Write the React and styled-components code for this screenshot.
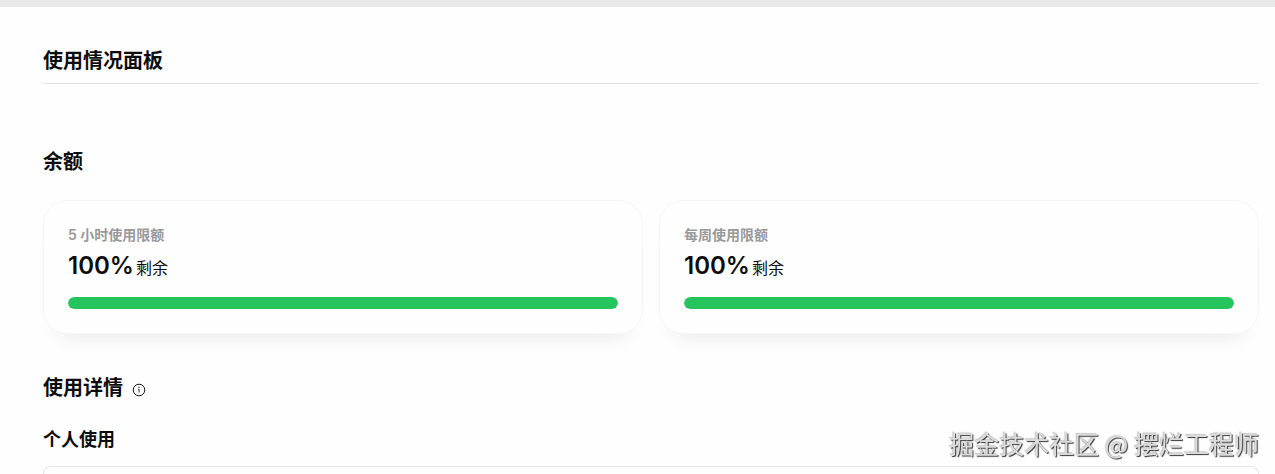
import React from "react";
import styled, { createGlobalStyle } from "styled-components";

const GlobalStyle = createGlobalStyle`
  *, *::before, *::after { box-sizing: border-box; }
  body {
    margin: 0;
    background: #fefefe;
    color: #0d0d0d;
    font-family: Inter, "Noto Sans CJK SC", sans-serif;
  }
  h1, h2, h3, p { margin: 0; }
`;

const Page = styled.div`
  min-height: 100vh;
  display: flex;
  flex-direction: column;
`;

const TopStrip = styled.div`
  height: 7px;
  background: #e8e8e8;
`;

const Content = styled.main`
  flex: 1;
  display: flex;
  flex-direction: column;
  padding: 40px 16px 0 43px;
`;

const PageHeader = styled.header`
  padding-bottom: 8px;
  border-bottom: 1px solid #e2e2e2;
  margin-bottom: 64px;
`;

const PageTitle = styled.h1`
  font-size: 20px;
  line-height: 28px;
  font-weight: 600;
`;

const SectionTitle = styled.h2`
  font-size: 20px;
  line-height: 28px;
  font-weight: 600;
`;

const SectionHeading = styled.div`
  display: flex;
  align-items: center;
  gap: 9px;
`;

const Cards = styled.section`
  display: grid;
  grid-template-columns: 1fr 1fr;
  gap: 16px;
  margin: 24px 0 40px;
`;

const Card = styled.article`
  padding: 24px;
  border: 1px solid #f6f6f6;
  border-radius: 24px;
  background: #fefefe;
  box-shadow: 0 18px 20px -14px rgba(0, 0, 0, 0.08);
`;

const CardLabel = styled.h3`
  font-size: 14px;
  line-height: 20px;
  font-weight: 600;
  color: #999;
`;

const CardValue = styled.p`
  display: flex;
  align-items: baseline;
  gap: 2px;
  margin: 3px 0 13px;
  font-size: 16px;
  line-height: 24px;
`;

const Percent = styled.strong`
  font-size: 24px;
  line-height: 36px;
  font-weight: 600;
`;

const Track = styled.div`
  height: 12px;
  border-radius: 6px;
  background: #ececec;
  overflow: hidden;
`;

const Fill = styled.div`
  height: 100%;
  border-radius: 6px;
  background: #26c45d;
`;

const InfoButton = styled.button`
  display: flex;
  padding: 2px 0;
  margin-top: 4px;
  border: 0;
  background: none;
  color: #1a1a1a;
`;

const SubTitle = styled.h3`
  margin: 24px 0 12px;
  font-size: 18px;
  line-height: 28px;
  font-weight: 600;
`;

const ChartPanel = styled.section`
  flex: 1;
  border: 1px solid #e6e6e6;
  border-bottom: 0;
  border-radius: 8px 8px 0 0;
`;

const Watermark = styled.div`
  position: fixed;
  right: 16px;
  bottom: 13px;
  font-family: "Noto Sans CJK SC", sans-serif;
  font-size: 25px;
  line-height: 36px;
  color: #dcdcdc;
  text-shadow: 1px 1px 1px #333, -1px -1px 1px #c8c8c8;
  white-space: nowrap;
  pointer-events: none;
`;

const limits = [
  { label: "5 小时使用限额", remaining: 100 },
  { label: "每周使用限额", remaining: 100 },
];

function LimitCard({ label, remaining }) {
  return (
    <Card>
      <CardLabel>{label}</CardLabel>
      <CardValue>
        <Percent>{remaining}%</Percent>
        <span>剩余</span>
      </CardValue>
      <Track
        role="progressbar"
        aria-label={label}
        aria-valuemin={0}
        aria-valuemax={100}
        aria-valuenow={remaining}
      >
        <Fill style={{ width: `${remaining}%` }} />
      </Track>
    </Card>
  );
}

function InfoIcon() {
  return (
    <svg width="14" height="14" viewBox="0 0 14 14" fill="none" aria-hidden="true">
      <circle cx="7" cy="7" r="5.8" stroke="currentColor" strokeWidth="1" />
      <path d="M6.2 6.4H7.1V9.6" stroke="currentColor" strokeWidth="0.9" />
      <circle cx="7" cy="4.4" r="0.65" fill="currentColor" />
    </svg>
  );
}

export default function App() {
  return (
    <Page>
      <GlobalStyle />
      <TopStrip />
      <Content>
        <PageHeader>
          <PageTitle>使用情况面板</PageTitle>
        </PageHeader>
        <SectionTitle>余额</SectionTitle>
        <Cards>
          {limits.map((limit) => (
            <LimitCard key={limit.label} {...limit} />
          ))}
        </Cards>
        <SectionHeading>
          <SectionTitle>使用详情</SectionTitle>
          <InfoButton type="button" aria-label="使用详情说明">
            <InfoIcon />
          </InfoButton>
        </SectionHeading>
        <SubTitle>个人使用</SubTitle>
        <ChartPanel aria-label="个人使用" />
      </Content>
      <Watermark>掘金技术社区 @ 摆烂工程师</Watermark>
    </Page>
  );
}
